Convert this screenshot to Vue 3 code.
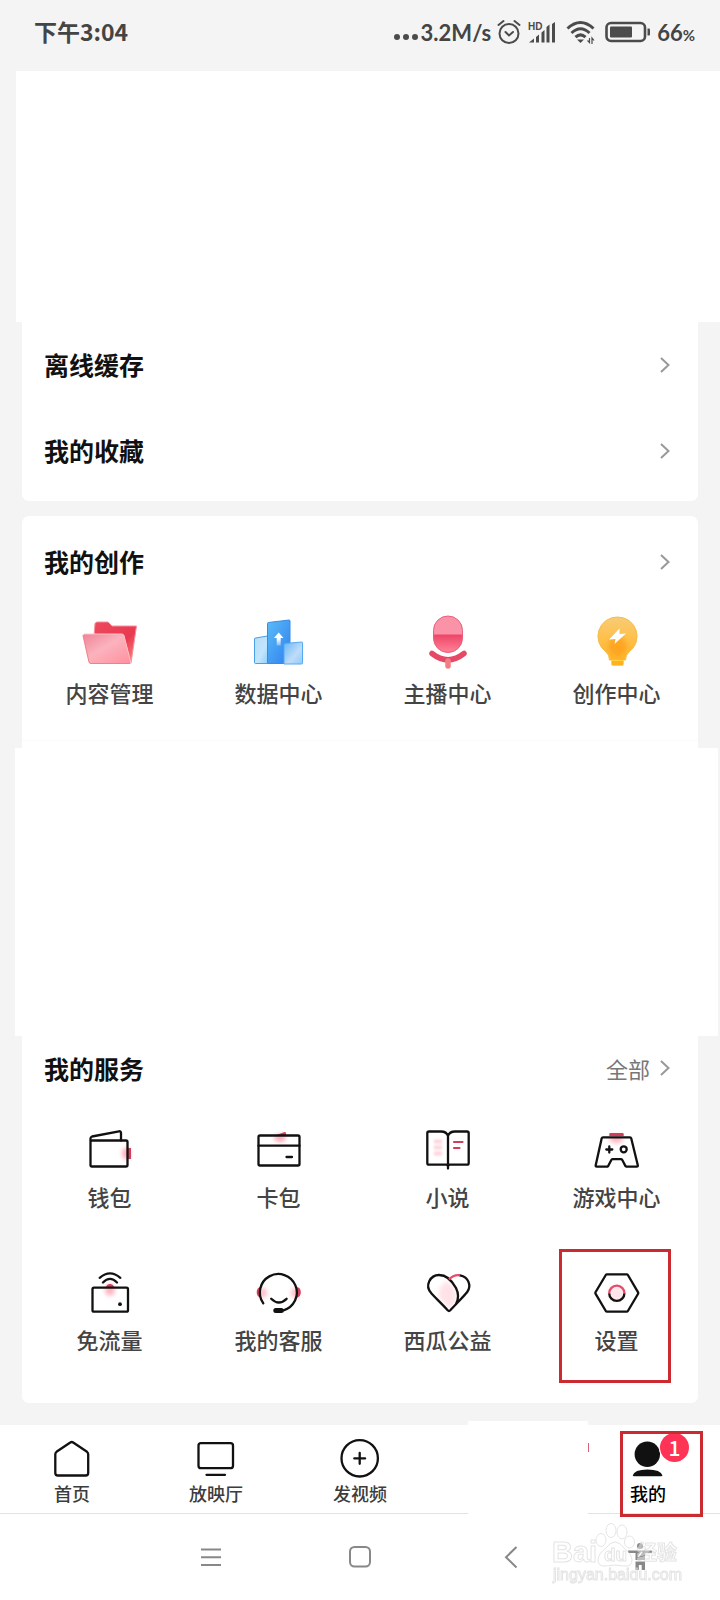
<script setup>
const rows = ['离线缓存', '我的收藏']

const creation = [
  {
    label: '内容管理',
    art: `<path d="M16.500 10H28l4 4h24.500L51 51H12l3-39.500Z" fill="url(#folderBack)" stroke="#f8909c" stroke-width="1" stroke-linejoin="round"/>
      <path d="M4.500 22H42q1.500 0 2 1.500L51 51.500H11q-1.500 0-2-1.500L3 24q0-2 1.500-2Z" fill="url(#folderFront)" stroke="#ffc4c6" stroke-width="1"/>
      <path d="M3 23l6 27q.5 1.500 2 1.500h39" fill="none" stroke="#e8717f" stroke-width=".8"/>`
  },
  {
    label: '数据中心',
    art: `<path d="M6.500 26 18.500 24v27.500h-12q-1 0-1-1V27q0-1 1-1Z" fill="url(#barPale)" stroke="#4a9fe8" stroke-width="1"/>
      <path d="M19.500 10.500 40 8q1 0 1 1v42.500H18.500V11.500q0-1 1-1Z" fill="url(#barBlue)" stroke="#3b8be0" stroke-width="1"/>
      <path d="M36 31.500 52.500 30q1 0 1 1v20q0 1-1 1H35V32.500Z" fill="url(#barPale2)" stroke="#55aaf2" stroke-width="1"/>
      <path d="M29.700 20.500 34.500 26h-2.800v7.500h-4V26h-2.800Z" fill="url(#arrowFade)"/>`
  },
  {
    label: '主播中心',
    art: `<rect x="15.500" y="4" width="29" height="36.500" rx="14.500" fill="#fa93a8"/>
      <path d="M15.500 22.500h29V26a14.500 14.500 0 0 1-29 0Z" fill="url(#micLow)"/>
      <rect x="15.500" y="4" width="29" height="36.500" rx="14.500" fill="none" stroke="#e8607c" stroke-width="1"/>
      <path d="M14 41.500Q30 54 46 41.500" fill="none" stroke="#e54965" stroke-width="5.500" stroke-linecap="round"/>
      <path d="M30 49v5" stroke="#f47d84" stroke-width="5.500" stroke-linecap="round"/>`
  },
  {
    label: '创作中心',
    art: `<path d="M30.500 5A19.300 19.300 0 0 1 42 40q-3.500 3-3.500 8h-16q0-5-3.500-8A19.300 19.300 0 0 1 30.500 5Z" fill="url(#bulb)" stroke="#f3bd4b" stroke-width="1"/>
      <ellipse cx="30.500" cy="34" rx="9" ry="10" fill="#ff9d16" opacity=".7" filter="url(#soft)"/>
      <path d="M24.500 48.500h12V52q0 1.500-1.500 1.500h-9q-1.500 0-1.500-1.500Z" fill="#ffb21c" stroke="#ffd33b" stroke-width=".8"/>
      <path d="M32.500 16.500 22 27.500l6.500-.5L27.500 32 39 21.500l-6.500.5Z" fill="#fff"/>`
  }
]

const services = [
  {
    label: '钱包',
    art: `<ellipse cx="46" cy="34.500" rx="4" ry="6" fill="#ff5876" opacity=".5" filter="url(#soft)"/>
      <path d="M48 29h3v11h-3Z" fill="#d23e5a"/>
      <path class="ln" d="M10.500 21.500v-2q0-1.500 1.500-2l27-5.200q2-.3 2 1.700v7.500"/>
      <rect class="ln" x="10.500" y="21.500" width="37" height="26" rx="1.500"/>`
  },
  {
    label: '卡包',
    art: `<ellipse cx="31" cy="19" rx="6" ry="4" fill="#ff5876" opacity=".5" filter="url(#soft)"/>
      <path d="M26 16.500 35 13.200q2-.6 2 1.300v2Z" fill="#d23e5a"/>
      <rect class="ln" x="9.500" y="16.500" width="41" height="30" rx="1.500"/>
      <path class="ln" d="M9.500 26.700h41M37.500 38H43"/>`
  },
  {
    label: '小说',
    art: `<g stroke="#ff6f88" stroke-width="4" opacity=".3" filter="url(#soft1)"><path d="M16 22.500h8M16 28.500h8M16 34.500h8"/></g>
      <path d="M36 23h8.500M36 29h5.500" stroke="#d23e5a" stroke-width="2.200" stroke-linecap="round"/>
      <path class="ln" d="M30 49.500V17q-1.500-4.500-7-4.500H11q-1.700 0-1.700 1.700V44q0 1.700 1.700 1.700h17q2 0 2 2 0-2 2-2h17q1.700 0 1.700-1.700V14.200q0-1.700-1.700-1.700H37q-5.500 0-7 4.500"/>`
  },
  {
    label: '游戏中心',
    art: `<ellipse cx="29.500" cy="20" rx="7" ry="4" fill="#ff5876" opacity=".45" filter="url(#soft)"/>
      <path d="M22.300 17v-2q0-1 1-1h12.400q1 0 1 1v2Z" fill="#d23e5a"/>
      <path class="ln" d="M16 18.300h27q.9 0 1.200 1l6.600 27q.2 1.400-1 1.400H39.500l-1-.6L35.300 41q-.5-.8-1.500-.8h-8q-1 0-1.500.8l-3.100 6-1 .7H9.700q-1.200 0-1-1.400l6-27q.3-1 1.300-1Z"/>
      <path class="ln" d="M22.300 27.500v6M19.300 30.500h6"/>
      <circle class="ln" cx="36.700" cy="30.300" r="3"/>`
  },
  {
    label: '免流量',
    art: `<ellipse cx="30" cy="28" rx="5" ry="6" fill="#ff5876" opacity=".45" filter="url(#soft)"/>
      <path d="M26 25a4.200 4.200 0 0 1 8 0Z" fill="#d23e5a"/>
      <rect class="ln" x="12.500" y="25.700" width="35.500" height="24" rx="1.500"/>
      <circle cx="40" cy="42.200" r="1.900" fill="#111"/>
      <path class="ln" d="M23 20.500q7-7.200 14 0M19.700 15.800q10.300-8.800 20.600 0"/>`
  },
  {
    label: '我的客服',
    art: `<g fill="#ff5876" opacity=".4" filter="url(#soft)"><ellipse cx="14" cy="31" rx="4" ry="5"/><ellipse cx="46" cy="31" rx="4" ry="5"/></g>
      <path d="M12 25q-4.300.5-4.300 5.300T12 35.700ZM47.500 25q4.300.5 4.300 5.300t-4.300 5.400Z" fill="#d23e5a"/>
      <path class="ln" d="M14.300 41.300A18.500 18.500 0 1 1 34.500 48.300"/>
      <rect x="24.300" y="46" width="10.500" height="5" rx="2.500" fill="#111"/>
      <path class="ln" d="M22.200 36.800q7.600 7.500 15.400 0"/>`
  },
  {
    label: '西瓜公益',
    art: `<path d="M29 19q-9 5-9 15l11 13q10-8 7-16-2-8-9-12Z" fill="#ff8198" opacity=".22" filter="url(#soft)"/>
      <path class="ln" d="M42 13.300c9 1.700 11.500 11 7.200 16.700C47 33 38 42 32.300 48.300q-1.300 1.300-2.600 0C24 42 19 37.500 13.500 31.500c-7.500-8-1-18.500 7.500-18.500 7.500 0 13.500 6.500 17 13 3.300 6.500 2.400 11.500 0 16"/>
      <path d="M31 17.500q4.500-5 11-4.200" fill="none" stroke="#e64c6a" stroke-width="2.300"/>`
  },
  {
    label: '设置',
    marked: true,
    art: `<circle cx="29.700" cy="31.300" r="8" fill="#ff8198" opacity=".2" filter="url(#soft)"/>
      <path class="ln" d="M20 12.300h19.700q.8 0 1.200.7l10.200 17.300q.4.700 0 1.400L40.900 49q-.4.700-1.200.7H20q-.8 0-1.200-.7L8.500 31.700q-.4-.7 0-1.400L18.800 13q.4-.7 1.200-.7Z"/>
      <path d="M22.200 31.300a7.600 7.600 0 0 0 15.200 0" fill="none" stroke="#111" stroke-width="2.300"/>
      <path d="M22.200 31.300a7.600 7.600 0 0 1 15.200 0" fill="none" stroke="#e64c6a" stroke-width="2.300"/>`
  }
]

const tabs = [
  { label: '首页', art: '<path class="ln" d="M22.300 8.500 8.500 17.800q-1.200.9-1.200 2.400V39q0 2.500 2.500 2.500h27.900q2.500 0 2.500-2.500V20.200q0-1.500-1.200-2.400L25.200 8.500q-1.500-1-2.900 0Z"/>' },
  { label: '放映厅', art: '<rect class="ln" x="6.500" y="9.200" width="34.500" height="25" rx="2.500"/><path class="ln" d="M14.500 40.800H33"/>' },
  { label: '发视频', art: '<circle class="ln" cx="23.700" cy="24.300" r="18.200"/><path class="ln" d="M23.700 19v10.800M18.300 24.400h10.800"/>' },
  { label: '' },
  { label: '我的', active: true, art: '<circle cx="23.300" cy="20.300" r="12.700" fill="#111"/><path d="M8.700 41.500q1.500-6 14.800-6t15 6l-1 .7H9.700Z" fill="#111"/>' }
]
</script>

<template>
  <div class="page">
    <svg class="defs" width="0" height="0" aria-hidden="true">
      <defs>
        <filter id="soft" x="-60%" y="-60%" width="220%" height="220%"><feGaussianBlur stdDeviation="2" /></filter>
        <filter id="soft1" x="-60%" y="-60%" width="220%" height="220%"><feGaussianBlur stdDeviation="1.200" /></filter>
        <linearGradient id="folderBack" x1="0" y1="0" x2="1" y2="1"><stop offset="0" stop-color="#ee4a5f" /><stop offset=".6" stop-color="#e83a50" /><stop offset="1" stop-color="#ff8d8b" /></linearGradient>
        <linearGradient id="folderFront" x1="0" y1="0" x2="1" y2="1"><stop offset="0" stop-color="#ee8397" /><stop offset=".45" stop-color="#fbb3bd" /><stop offset="1" stop-color="#ff8f9f" /></linearGradient>
        <linearGradient id="barBlue" x1="0" y1="0" x2="1" y2="1"><stop offset="0" stop-color="#5bbcf8" /><stop offset="1" stop-color="#2f80ee" /></linearGradient>
        <linearGradient id="barPale" x1="0" y1="0" x2="1" y2="1"><stop offset="0" stop-color="#b5dcf6" /><stop offset=".6" stop-color="#c3e5fd" /><stop offset="1" stop-color="#8fd0fd" /></linearGradient>
        <linearGradient id="barPale2" x1="0" y1="0" x2="1" y2="1"><stop offset="0" stop-color="#68b6fa" /><stop offset=".6" stop-color="#bfdcf8" /><stop offset="1" stop-color="#90cbfb" /></linearGradient>
        <linearGradient id="arrowFade" x1="0" y1="0" x2="0" y2="1"><stop offset=".5" stop-color="#fff" /><stop offset="1" stop-color="#fff" stop-opacity=".3" /></linearGradient>
        <linearGradient id="micLow" x1="0" y1="0" x2="0" y2="1"><stop offset="0" stop-color="#ee4468" /><stop offset="1" stop-color="#ff8396" /></linearGradient>
        <linearGradient id="bulb" x1="0" y1="0" x2="0" y2="1"><stop offset="0" stop-color="#f8cb75" /><stop offset=".5" stop-color="#ffc04a" /><stop offset="1" stop-color="#ffb32a" /></linearGradient>
      </defs>
    </svg>

    <header class="status">
      <span class="time">下午3:04</span>
      <div class="status-right">
        <svg width="24" height="24" viewBox="0 0 24 24" fill="#4b4b4b"><circle cx="3" cy="17" r="3" /><circle cx="12" cy="17" r="3" /><circle cx="21" cy="17" r="3" /></svg>
        <span class="speed">3.2M/s</span>
        <svg class="alarm" width="24" height="26" viewBox="0 0 24 26" fill="none" stroke="#4b4b4b" stroke-width="2" stroke-linecap="round"><circle cx="12" cy="14.500" r="9.500" /><path d="M8.500 13l3.500 3.500 4-3.500M1.500 6 6.500 2M17.500 2l5 4" /></svg>
        <svg class="signal" width="28" height="26" viewBox="0 0 28 26">
          <path d="M1 23.500 6 19.500v4ZM8 18l3-2.500v8H8Z M13.500 13.500l3-2.500v12.500h-3ZM18.500 8l3-2.500v18h-3ZM24 5l3-2v20.500h-3Z" fill="#4b4b4b" />
          <text x="0" y="11" font-size="10" font-weight="700" fill="#4b4b4b">HD</text>
        </svg>
        <svg class="wifi" width="30" height="26" viewBox="0 0 30 26" fill="none" stroke="#4b4b4b" stroke-width="3"><path d="M1.500 9.500q13-12 26 0M5.500 14q9-8.500 18 0M9.500 18.200q5-4.700 10 0" /><path d="M11 20.500h7l-3.500 3.500Z" fill="#4b4b4b" stroke="none" /><path d="M23.500 19v4.500l-2-2M26 25v-6l2 2.500" stroke-width="1.200" /></svg>
        <svg class="battery" width="46" height="22" viewBox="0 0 46 22"><rect x="1.500" y="2" width="38.500" height="18" rx="4.500" fill="none" stroke="#4b4b4b" stroke-width="2.600" /><rect x="5" y="5.500" width="22" height="11" rx="1" fill="#4b4b4b" /><path d="M42.500 7.500h1.500q1 0 1 1v5q0 1-1 1h-1.500Z" fill="#4b4b4b" /></svg>
        <span class="speed">66<small>%</small></span>
      </div>
    </header>

    <main>
      <div class="blank top"></div>

      <section class="card rows">
        <a v-for="r in rows" :key="r" href="#" class="row">
          <span class="title">{{ r }}</span>
          <svg class="chev" width="12" height="18" viewBox="0 0 12 18"><path d="M2 2l7.500 7L2 16" /></svg>
        </a>
      </section>

      <section class="card creation">
        <a href="#" class="row head">
          <h2 class="title">我的创作</h2>
          <svg class="chev" width="12" height="18" viewBox="0 0 12 18"><path d="M2 2l7.500 7L2 16" /></svg>
        </a>
        <div class="grid">
          <button v-for="c in creation" :key="c.label" type="button" class="item">
            <svg width="60" height="60" viewBox="0 0 60 60" aria-hidden="true" v-html="c.art"></svg>
            <span>{{ c.label }}</span>
          </button>
        </div>
        <div class="rule"></div>
      </section>

      <div class="blank middle"></div>

      <section class="card services">
        <div class="row head">
          <h2 class="title">我的服务</h2>
          <a href="#" class="all">全部
            <svg class="chev" width="12" height="18" viewBox="0 0 12 18"><path d="M2 2l7.500 7L2 16" /></svg>
          </a>
        </div>
        <div class="grid">
          <button v-for="s in services" :key="s.label" type="button" class="item" :class="{ marked: s.marked }">
            <svg width="60" height="60" viewBox="0 0 60 60" aria-hidden="true" v-html="s.art"></svg>
            <span>{{ s.label }}</span>
          </button>
        </div>
      </section>
    </main>

    <nav class="tabs">
      <template v-for="(t, i) in tabs" :key="i">
        <a v-if="t.label" href="#" class="tab" :class="{ active: t.active }">
          <svg width="48" height="48" viewBox="0 0 48 48" aria-hidden="true" v-html="t.art"></svg>
          <span>{{ t.label }}</span>
          <b v-if="t.active" class="badge">1</b>
        </a>
        <div v-else class="tab"></div>
      </template>
      <div class="cover"></div>
    </nav>

    <footer class="system">
      <button type="button" aria-label="菜单"><svg width="28" height="28" viewBox="0 0 28 28"><path d="M4 6.500h20M4 14.200h20M4 22h20" /></svg></button>
      <button type="button" aria-label="主页"><svg width="28" height="28" viewBox="0 0 28 28"><rect x="3" y="4" width="20" height="19.500" rx="4.500" /></svg></button>
      <button type="button" aria-label="返回"><svg width="28" height="28" viewBox="0 0 28 28"><path d="M20.500 4 10 14.200 20.500 24.500" /></svg></button>
      <button type="button" aria-label="无障碍"><svg width="28" height="28" viewBox="0 0 28 28"><g fill="#888" stroke="none"><circle cx="14" cy="3" r="3" /><path d="M2 7.500h24v2.500h-7V17H9.500v-7H2ZM9.500 18.500H19V27h-3.300v-5h-2.900v5H9.500Z" /></g><path d="M16 9l-4 5" stroke="#fff" stroke-width="1.500" /></svg></button>
      <svg class="watermark" width="136" height="66" viewBox="0 0 136 66">
        <g fill="#fff" fill-opacity=".6" stroke="#d9d9d9" stroke-width="1">
          <ellipse cx="51" cy="18" rx="5" ry="6.500" /><ellipse cx="61" cy="8.500" rx="5" ry="7" /><ellipse cx="72" cy="10" rx="5" ry="7" /><ellipse cx="79.500" cy="20" rx="5" ry="6" />
          <path d="M65 20q5 0 9 6 8 6 8 12 0 7-8 6-9-2-18 0-8 1-8-6 0-6 8-12 4-6 9-6Z" />
          <text x="2" y="40" font-size="29" font-weight="700">Bai</text>
          <text x="54" y="39" font-size="19" font-weight="700">du</text>
          <text class="cjk" x="87" y="38" font-size="20" font-weight="700">经验</text>
          <text x="3" y="58" font-size="16">jingyan.baidu.com</text>
        </g>
      </svg>
    </footer>
  </div>
</template>

<style>
body {
  background: #fff;
}
</style>

<style scoped>
.page {
  background: #f4f4f4;
  color: #111;
  font-family: "Noto Sans CJK SC", "Noto Sans", sans-serif;
  overflow-x: hidden;
}
.defs { position: absolute; }
a { color: inherit; text-decoration: none; }
button { border: 0; background: none; padding: 0; font: inherit; color: inherit; }
h2 { margin: 0; }
:deep(.ln) {
  fill: none;
  stroke: #111;
  stroke-width: 2.3;
  stroke-linecap: round;
  stroke-linejoin: round;
}
.status {
  display: flex;
  justify-content: space-between;
  align-items: center;
  box-sizing: border-box;
  height: 71px;
  padding: 0 25px 7px 34px;
  color: #444;
  font-size: 22px;
  font-weight: 700;
}
.time { font-size: 23px; padding-bottom: 2px; }
.status-right { display: flex; align-items: center; }
.status-right text { font-family: "Liberation Sans", sans-serif; }
.speed { margin-left: 3px; font-family: Lato, sans-serif; }
.speed small { font-size: 15px; }
.alarm { margin-left: 6px; }
.signal { margin-left: 7px; }
.wifi { margin-left: 10px; }
.battery { margin: 0 3px 0 9px; }
.blank { background: #fff; }
.top { height: 251px; margin-left: 16px; }
.middle { height: 288px; margin: 0 2px 0 15px; }
.card { margin: 0 22px; background: #fff; }
.rows { padding-bottom: 7px; border-radius: 0 0 7px 7px; }
.row {
  display: flex;
  align-items: center;
  justify-content: space-between;
  height: 86px;
  padding: 0 27px 0 22px;
}
.title { padding-bottom: 2px; font-size: 25px; line-height: 36px; font-weight: 700; }
.chev { fill: none; stroke: #999; stroke-width: 2; }
.creation { margin-top: 15px; border-radius: 7px 7px 0 0; }
.creation .head { height: 92px; }
.grid {
  display: grid;
  grid-template-columns: repeat(4, 1fr);
  margin: 0 -3px 0 3px;
}
.item {
  position: relative;
  display: flex;
  flex-direction: column;
  align-items: center;
  gap: 2px;
  color: #444;
  font-size: 22px;
  font-weight: 500;
  line-height: 30px;
}
.creation .item { gap: 5px; padding-top: 4px; }
.rule { height: 1px; margin-top: 33px; border-bottom: 7px solid #fff; background: #fafafa; }
.services { border-radius: 0 0 7px 7px; padding-bottom: 49px; }
.services .head { height: 66px; }
.services .grid { margin-top: 17px; row-gap: 51px; }
.all { display: flex; align-items: center; gap: 9px; padding-bottom: 2px; color: #777; font-size: 22px; line-height: 30px; }
.marked::after {
  content: "";
  position: absolute;
  top: -13px;
  left: 50%;
  width: 106px;
  height: 128px;
  margin-left: -58px;
  border: 3px solid #cb2a31;
}
.tabs {
  position: relative;
  z-index: 1;
  display: grid;
  grid-template-columns: repeat(5, 1fr);
  margin-top: 22px;
  padding: 9px 0;
  border-bottom: 1px solid #e2e2e2;
  background: #fff;
}
.tab {
  position: relative;
  display: flex;
  flex-direction: column;
  align-items: center;
  color: #3c3c3c;
  font-size: 18px;
  font-weight: 500;
  line-height: 22px;
}
.active { color: #000; }
.active::after {
  content: "";
  position: absolute;
  top: -3px;
  left: 50%;
  width: 77px;
  height: 80px;
  margin-left: -28px;
  border: 3px solid #cb2a31;
}
.badge {
  position: absolute;
  top: -1px;
  left: 50%;
  width: 29px;
  height: 29px;
  margin-left: 12px;
  border-radius: 50%;
  background: #fe3355;
  box-shadow: 0 0 0 1px #fff;
  color: #fff;
  font-size: 21px;
  font-weight: 500;
  line-height: 29px;
  text-align: center;
}
.cover {
  position: absolute;
  top: -4px;
  bottom: -2px;
  left: 65%;
  width: 120px;
  background: #fff;
}
.cover::after {
  content: "";
  position: absolute;
  top: 22px;
  right: -1px;
  width: 1px;
  height: 9px;
  background: #d8617a;
}
.system {
  position: relative;
  display: grid;
  grid-template-columns: 150fr 150fr 150fr 110fr;
  align-items: center;
  height: 86px;
  padding: 0 25px 0 136px;
  background: #fff;
}
.system button { display: flex; justify-content: center; }
.system button svg { fill: none; stroke: #888; stroke-width: 2; overflow: visible; }
.watermark {
  position: absolute;
  right: 34px;
  top: 8px;
  font-family: "Liberation Sans", sans-serif;
  opacity: .7;
}
.cjk { font-family: "Noto Sans CJK SC", sans-serif; }
</style>
